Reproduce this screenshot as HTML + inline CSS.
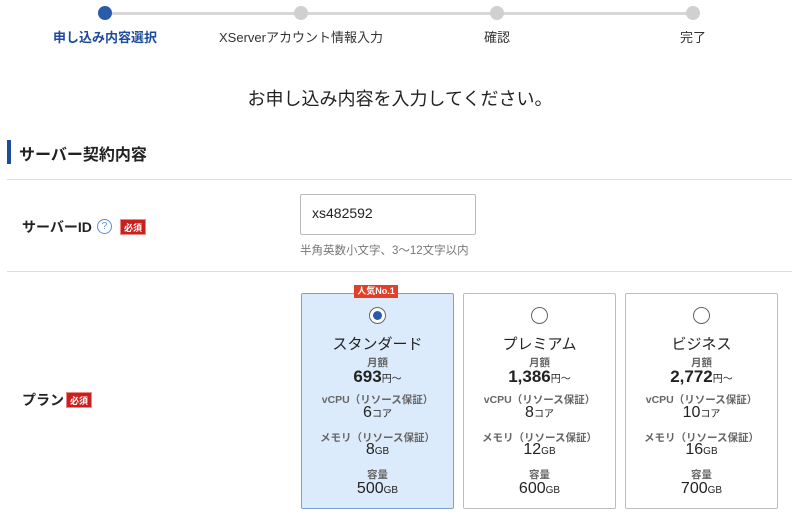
<!DOCTYPE html>
<html><head><meta charset="utf-8"><style>
*{margin:0;padding:0;box-sizing:border-box}
body{width:800px;height:516px;background:#fff;font-family:"Liberation Sans","Noto Sans CJK JP",sans-serif;color:#222;position:relative;overflow:hidden}
.a{position:absolute;white-space:nowrap}
.dot{position:absolute;width:14px;height:14px;border-radius:50%;background:#d0d0d0;top:6px}
.step{position:absolute;top:27px;font-size:13px;color:#333;transform:translateX(-50%)}
.card{position:absolute;top:293px;width:153px;height:216px;border:1px solid #bdbdbd;border-radius:2px;background:#fff;text-align:center}
.card.sel{background:#dcebfb;border-color:#7f9ed4}
.radio{position:absolute;left:67px;top:13px;width:17px;height:17px;border-radius:50%;border:1px solid #666;background:#fff}
.card .l{position:absolute;left:0;right:0;font-size:10.5px;color:#666;font-weight:bold}
.card .v{position:absolute;left:0;right:0;font-size:15px;color:#222}
.card .v small{font-size:10px}
.req{position:absolute;background:#c9201e;color:#fff;font-size:9px;font-weight:bold;width:26px;height:16px;line-height:16px;text-align:center;border:1px solid #e88}
</style></head><body>
<div class="a" style="left:105px;top:12px;width:588px;height:3px;background:#d8d8d8"></div>
<div class="dot" style="left:98px;background:#2a5ba8"></div>
<div class="dot" style="left:294px"></div>
<div class="dot" style="left:490px"></div>
<div class="dot" style="left:686px"></div>
<div class="step" style="left:105px;color:#1d4c9b;font-weight:bold">申し込み内容選択</div>
<div class="step" style="left:301px">XServerアカウント情報入力</div>
<div class="step" style="left:497px">確認</div>
<div class="step" style="left:693px">完了</div>
<div class="a" style="left:0;right:0;top:85px;text-align:center;font-size:18px;color:#222">お申し込み内容を入力してください。</div>
<div class="a" style="left:7px;top:140px;width:4px;height:24px;background:#1d4c9b"></div>
<div class="a" style="left:19px;top:141px;font-size:16px;font-weight:bold;color:#222">サーバー契約内容</div>
<div class="a" style="left:7px;top:179px;width:785px;height:1px;background:#ddd"></div>
<div class="a" style="left:22px;top:217px;font-size:14px;font-weight:bold">サーバーID</div>
<div class="a" style="left:97px;top:219px;width:15px;height:15px;border:1px solid #5b8fd0;border-radius:50%;color:#5b8fd0;font-size:10px;text-align:center;line-height:13px">?</div>
<div class="req" style="left:120px;top:219px">必須</div>
<div class="a" style="left:300px;top:194px;width:176px;height:41px;border:1px solid #bbb;border-radius:2px;font-size:14px;padding:10px 11px">xs482592</div>
<div class="a" style="left:300px;top:242px;font-size:11.5px;color:#777">半角英数小文字、3〜12文字以内</div>
<div class="a" style="left:7px;top:271px;width:785px;height:1px;background:#ddd"></div>
<div class="a" style="left:22px;top:390px;font-size:14px;font-weight:bold">プラン</div>
<div class="req" style="left:66px;top:392px">必須</div>

<div class="card sel" style="left:301px">
<div class="radio"><div style="position:absolute;left:3px;top:3px;width:9px;height:9px;border-radius:50%;background:#2a5ba8"></div></div>
<div class="v" style="top:39px;font-size:15px">スタンダード</div>
<div class="l" style="top:61px">月額</div>
<div class="v" style="top:73px;font-weight:bold;font-size:17px">693<small style="font-weight:normal">円〜</small></div>
<div class="l" style="top:98px">vCPU（リソース保証）</div>
<div class="v" style="top:110px;font-size:16px">6<small>コア</small></div>
<div class="l" style="top:136px">メモリ（リソース保証）</div>
<div class="v" style="top:147px;font-size:16px">8<small>GB</small></div>
<div class="l" style="top:173px">容量</div>
<div class="v" style="top:186px;font-size:16px">500<small>GB</small></div>
</div>
<div class="a" style="left:354px;top:285px;width:44px;height:13px;background:#e0402a;color:#fff;font-size:9px;font-weight:bold;text-align:center;line-height:13px">人気No.1</div>

<div class="card" style="left:463px">
<div class="radio"></div>
<div class="v" style="top:39px;font-size:15px">プレミアム</div>
<div class="l" style="top:61px">月額</div>
<div class="v" style="top:73px;font-weight:bold;font-size:17px">1,386<small style="font-weight:normal">円〜</small></div>
<div class="l" style="top:98px">vCPU（リソース保証）</div>
<div class="v" style="top:110px;font-size:16px">8<small>コア</small></div>
<div class="l" style="top:136px">メモリ（リソース保証）</div>
<div class="v" style="top:147px;font-size:16px">12<small>GB</small></div>
<div class="l" style="top:173px">容量</div>
<div class="v" style="top:186px;font-size:16px">600<small>GB</small></div>
</div>

<div class="card" style="left:625px">
<div class="radio"></div>
<div class="v" style="top:39px;font-size:15px">ビジネス</div>
<div class="l" style="top:61px">月額</div>
<div class="v" style="top:73px;font-weight:bold;font-size:17px">2,772<small style="font-weight:normal">円〜</small></div>
<div class="l" style="top:98px">vCPU（リソース保証）</div>
<div class="v" style="top:110px;font-size:16px">10<small>コア</small></div>
<div class="l" style="top:136px">メモリ（リソース保証）</div>
<div class="v" style="top:147px;font-size:16px">16<small>GB</small></div>
<div class="l" style="top:173px">容量</div>
<div class="v" style="top:186px;font-size:16px">700<small>GB</small></div>
</div>
</body></html>
